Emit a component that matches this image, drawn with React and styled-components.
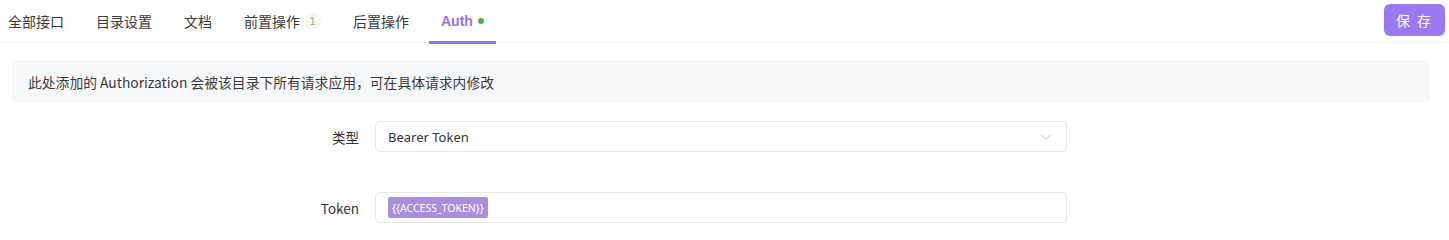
import styled, { createGlobalStyle } from "styled-components";

const GlobalStyle = createGlobalStyle`
    body {
        margin: 0;
        background: #fff;
        font-family: "Noto Sans CJK SC", "Noto Sans", sans-serif;
        color: #333;
    }
`;

const tabs = [
    { label: "全部接口" },
    { label: "目录设置" },
    { label: "文档" },
    { label: "前置操作", badge: "1" },
    { label: "后置操作" },
    { label: "Auth", active: true, dot: true },
];

export default function App() {
    return (
        <>
            <GlobalStyle />
            <Page>
                <TabBar>
                    <TabList>
                        {tabs.map((t) => (
                            <Tab key={t.label} $active={t.active}>
                                {t.label}
                                {t.badge && <Badge>{t.badge}</Badge>}
                                {t.dot && <Dot />}
                            </Tab>
                        ))}
                    </TabList>
                    <SaveButton>保 存</SaveButton>
                </TabBar>
                <Notice>此处添加的 Authorization 会被该目录下所有请求应用，可在具体请求内修改</Notice>
                <Form>
                    <Row>
                        <Label>类型</Label>
                        <Field>
                            <FieldText>Bearer Token</FieldText>
                            <Chevron viewBox="0 0 12 12">
                                <path d="M1.5 4 L6 8.5 L10.5 4" fill="none" stroke="#c4c4c4" strokeWidth="1" />
                            </Chevron>
                        </Field>
                    </Row>
                    <Row $top={40}>
                        <Label>Token</Label>
                        <Field>
                            <VarTag>{"{{ACCESS_TOKEN}}"}</VarTag>
                        </Field>
                    </Row>
                </Form>
            </Page>
        </>
    );
}

const Page = styled.div`
    width: 1449px;
    height: 240px;
    overflow: hidden;
`;

const TabBar = styled.div`
    display: flex;
    align-items: flex-start;
    justify-content: space-between;
    height: 43px;
    border-bottom: 1px solid #f0f0f0;
    padding-right: 4px;
    box-sizing: border-box;
`;

const TabList = styled.div`
    display: flex;
    padding-left: 8px;
    gap: 32px;
`;

const Tab = styled.div`
    position: relative;
    display: flex;
    align-items: center;
    height: 42px;
    font-size: 14px;
    color: ${(p) => (p.$active ? "#9373ee" : "#3a3a3a")};
    font-weight: ${(p) => (p.$active ? 600 : 400)};
    font-family: ${(p) => (p.$active ? `"Liberation Sans", "Noto Sans CJK SC", sans-serif` : "inherit")};
    white-space: nowrap;

    &::after {
        content: "";
        display: ${(p) => (p.$active ? "block" : "none")};
        position: absolute;
        left: -12px;
        right: -12px;
        bottom: -2px;
        height: 3px;
        background: #9373ee;
    }
`;

const Badge = styled.span`
    display: inline-flex;
    align-items: center;
    justify-content: center;
    width: 17px;
    height: 17px;
    margin-left: 4px;
    border-radius: 50%;
    background: #f5f5f5;
    color: #8cc06a;
    font-size: 11px;
    font-weight: 400;
    font-family: "Liberation Sans", sans-serif;
`;

const Dot = styled.span`
    width: 6px;
    height: 6px;
    margin-left: 5px;
    border-radius: 50%;
    background: #4caf50;
`;

const SaveButton = styled.button`
    margin-top: 4px;
    width: 61px;
    height: 32px;
    border: none;
    border-radius: 6px;
    background: #9a78ef;
    color: #fff;
    font-size: 14px;
    font-family: "Noto Sans CJK SC", sans-serif;
    letter-spacing: 2px;
    cursor: pointer;
`;

const Notice = styled.div`
    margin: 17px 19px 0 12px;
    height: 43px;
    display: flex;
    align-items: center;
    padding-left: 16px;
    background: #f7f8fa;
    border-radius: 6px;
    font-size: 13.8px;
    color: #3a3a3a;
`;

const Form = styled.div`
    display: flex;
    flex-direction: column;
    padding-top: 18px;
`;

const Row = styled.div`
    display: grid;
    grid-template-columns: 359px 692px;
    column-gap: 16px;
    align-items: center;
    margin-top: ${(p) => p.$top || 0}px;
`;

const Label = styled.div`
    text-align: right;
    font-size: 13.5px;
    color: #333;
`;

const Field = styled.div`
    height: 31px;
    box-sizing: border-box;
    border: 1px solid #e8e8e8;
    border-radius: 5px;
    display: flex;
    align-items: center;
    padding: 0 12px 0 12px;
`;

const FieldText = styled.span`
    flex: 1;
    font-size: 13px;
    color: #333;
    font-family: "Noto Sans", sans-serif;
`;

const Chevron = styled.svg`
    width: 12px;
    height: 12px;
    margin-right: 2px;
`;

const VarTag = styled.span`
    display: inline-flex;
    align-items: center;
    height: 21px;
    padding: 0 4px;
    border-radius: 2px;
    background: #a98ddf;
    color: #fff;
    font-size: 10.5px;
    font-family: "Noto Sans", sans-serif;
`;
